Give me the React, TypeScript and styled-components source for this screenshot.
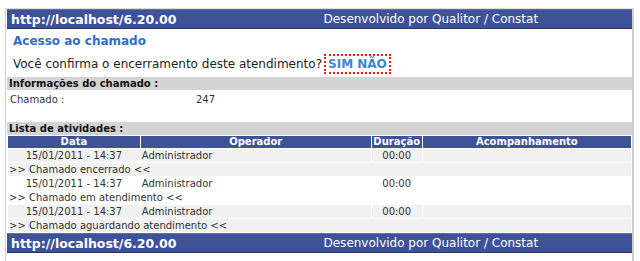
import React, { FC } from "react";
import styled, { createGlobalStyle } from "styled-components";

const GlobalStyle = createGlobalStyle`
  body {
    margin: 0;
    background: #ffffff;
    font-family: "DejaVu Sans", Verdana, sans-serif;
    color: #222;
  }
`;

const Frame = styled.div`
  margin: 8px 0 0 5px;
  width: 625px;
  border-left: 1px solid #cfcfcf;
  border-right: 2px solid #cfcfcf;
  border-top: 1px solid #dcdcdc;
  padding-left: 1px;
  padding-bottom: 9px;
`;

const Bar = styled.div`
  display: flex;
  height: 18px;
  background: #3e5297;
  border-top: 1px solid #5d6fae;
  border-bottom: 1px solid #28346a;
  color: #ffffff;
`;

const BarCell = styled.div<{ $bold?: boolean }>`
  flex: 1;
  display: flex;
  align-items: center;
  padding-left: 4px;
  font-size: ${({ $bold }) => ($bold ? "12.5px" : "12px")};
  font-weight: ${({ $bold }) => ($bold ? "bold" : "normal")};
  white-space: nowrap;
`;

const Title = styled.div`
  margin-top: 4px;
  padding-left: 6px;
  height: 16px;
  line-height: 16px;
  font-size: 12px;
  font-weight: bold;
  color: #2e6fcd;
`;

const Question = styled.div`
  margin-top: 5px;
  padding-left: 6px;
  height: 20px;
  display: flex;
  align-items: center;
  font-size: 12px;
  color: #222;
`;

const Choice = styled.span`
  margin-left: 2px;
  padding: 1px 2px;
  border: 2px dotted #e02020;
  font-weight: bold;
  color: #3a86d2;
  line-height: 14px;
`;

const SectionHeader = styled.div<{ $gap?: number }>`
  margin-top: ${({ $gap }) => $gap ?? 0}px;
  height: 13px;
  line-height: 13px;
  padding-left: 2px;
  background: #d4d4d4;
  font-size: 10px;
  font-weight: bold;
  color: #111;
`;

const InfoRow = styled.div`
  display: flex;
  height: 16px;
  align-items: center;
  margin-top: 1px;
  font-size: 10px;
  color: #333;
`;

const InfoLabel = styled.span`
  width: 186px;
  padding-left: 3px;
`;

const Table = styled.table`
  width: 100%;
  border-spacing: 1px;
  margin-top: 0;
  font-size: 10px;
  color: #333;
`;

const HeadCell = styled.th<{ $w: number }>`
  width: ${({ $w }) => $w}px;
  height: 12px;
  line-height: 12px;
  padding: 0;
  background: #3e5297;
  color: #ffffff;
  font-weight: bold;
  text-align: center;
`;

const Row = styled.tr<{ $shade: boolean }>`
  background: ${({ $shade }) => ($shade ? "#f1f1f1" : "#ffffff")};
`;

const Cell = styled.td<{ $align?: string }>`
  height: 13px;
  line-height: 13px;
  padding: 0 1px;
  text-align: ${({ $align }) => $align ?? "left"};
  white-space: nowrap;
`;

const activities = [
  { date: "15/01/2011 - 14:37", op: "Administrador", dur: "00:00", note: ">> Chamado encerrado <<" },
  { date: "15/01/2011 - 14:37", op: "Administrador", dur: "00:00", note: ">> Chamado em atendimento <<" },
  { date: "15/01/2011 - 14:37", op: "Administrador", dur: "00:00", note: ">> Chamado aguardando atendimento <<" },
];

const TopBar: FC = () => (
  <Bar>
    <BarCell $bold>http://localhost/6.20.00</BarCell>
    <BarCell>Desenvolvido por Qualitor / Constat</BarCell>
  </Bar>
);

const App: FC = () => {
  return (
    <>
      <GlobalStyle />
      <Frame>
        <TopBar />
        <Title>Acesso ao chamado</Title>
        <Question>
          Você confirma o encerramento deste atendimento?
          <Choice>SIM NÃO</Choice>
        </Question>
        <SectionHeader $gap={3}>Informações do chamado :</SectionHeader>
        <InfoRow>
          <InfoLabel>Chamado :</InfoLabel>
          <span>247</span>
        </InfoRow>
        <SectionHeader $gap={15}>Lista de atividades :</SectionHeader>
        <Table>
          <thead>
            <tr>
              <HeadCell $w={132}>Data</HeadCell>
              <HeadCell $w={231}>Operador</HeadCell>
              <HeadCell $w={50}>Duração</HeadCell>
              <HeadCell $w={209}>Acompanhamento</HeadCell>
            </tr>
          </thead>
          <tbody>
            {activities.map((a, i) => (
              <React.Fragment key={i}>
                <Row $shade={i % 2 === 0}>
                  <Cell $align="center">{a.date}</Cell>
                  <Cell>{a.op}</Cell>
                  <Cell $align="center">{a.dur}</Cell>
                  <Cell />
                </Row>
                <Row $shade={i % 2 === 0}>
                  <Cell colSpan={4}>{a.note}</Cell>
                </Row>
              </React.Fragment>
            ))}
          </tbody>
        </Table>
        <TopBar />
      </Frame>
    </>
  );
};

export default App;
